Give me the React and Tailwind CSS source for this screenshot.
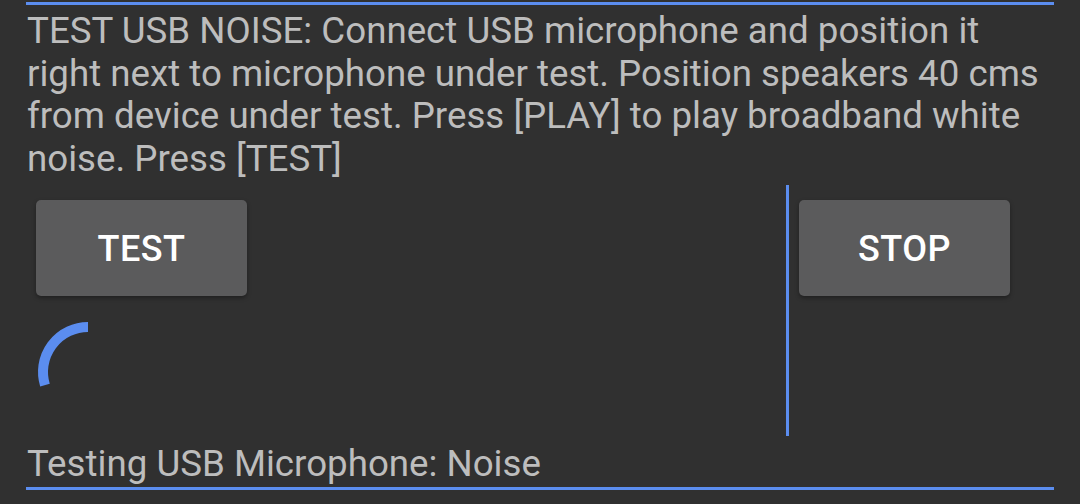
import React from 'react'

const blue = 'bg-[#5b8def]'

function Button({ label }) {
  return (
    <button className="w-[211px] h-[96px] rounded-[5px] bg-[#5b5b5c] text-white text-[36px] font-medium tracking-[0.5px] pt-[2px] shadow-[0_2px_4px_rgba(0,0,0,0.35)]">
      {label}
    </button>
  )
}

function Spinner() {
  return (
    <svg width="110" height="110" viewBox="0 0 110 110" className="block">
      <path
        d="M 11.97 68.16 A 45 45 0 0 1 55 10"
        fill="none"
        stroke="#5b8def"
        strokeWidth="10"
        strokeLinecap="butt"
      />
    </svg>
  )
}

export default function App() {
  return (
    <div className="w-[1080px] h-[504px] overflow-hidden bg-[#303030] font-['Roboto',sans-serif] text-[#bdbdbd]">
      <div className={`ml-[26px] mt-[2px] w-[1028px] h-[3px] ${blue}`} />
      <p className="ml-[27px] mt-[5px] w-[1040px] text-[36.7px] leading-[42.5px] whitespace-nowrap">
        TEST USB NOISE: Connect USB microphone and position it
        <br />
        right next to microphone under test. Position speakers 40 cms
        <br />
        from device under test. Press [PLAY] to play broadband white
        <br />
        noise. Press [TEST]
      </p>
      <div className="flex mt-[5px] h-[251px]">
        <div className="w-[786px] flex flex-col">
          <div className="ml-[36px] mt-[15px]">
            <Button label="TEST" />
          </div>
          <div className="ml-[33px] mt-[21px]">
            <Spinner />
          </div>
        </div>
        <div className={`w-[3px] h-full ${blue}`} />
        <div className="ml-[10px] mt-[15px]">
          <Button label="STOP" />
        </div>
      </div>
      <p className="ml-[27px] mt-[7px] text-[36.7px] leading-[42.5px]">Testing USB Microphone: Noise</p>
      <div className={`ml-[26px] mt-[1px] w-[1028px] h-[3px] ${blue}`} />
    </div>
  )
}
